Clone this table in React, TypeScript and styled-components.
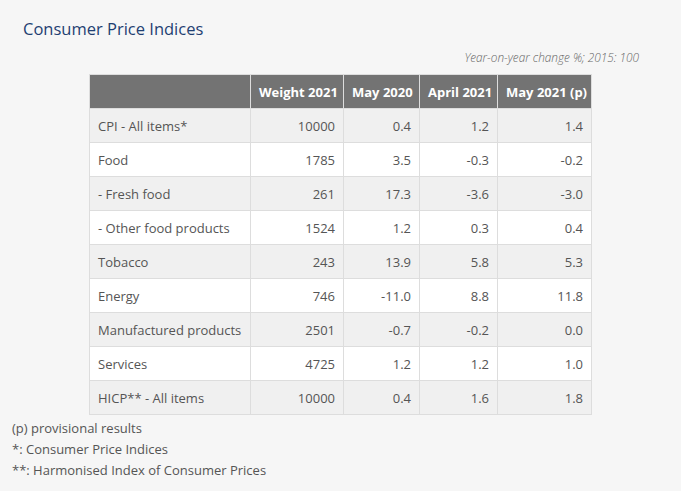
import React from "react";
import styled, { createGlobalStyle } from "styled-components";

const Global = createGlobalStyle`
  html, body { margin: 0; padding: 0; background: #f6f6f6; }
  body { font-family: "Open Sans", "Liberation Sans", Arial, sans-serif; color: #555; }
`;

const Page = styled.div`
  padding: 17px 42px 0 12px;
  width: 681px;
  box-sizing: border-box;
`;

const Title = styled.h2`
  margin: 0 0 0 11px;
  font-size: 16.5px;
  line-height: 24px;
  font-weight: 400;
  color: #1f3f72;
`;

const Note = styled.div`
  margin-top: 8px;
  text-align: right;
  font-size: 11.8px;
  line-height: 16px;
  font-style: italic;
  font-weight: 300;
  color: #666;
`;

const Table = styled.table`
  margin: 9px 0 0 77px;
  border-collapse: collapse;
  width: 502px;
  table-layout: fixed;
  font-size: 13px;
  border: 1px solid #ddd;
`;

const Th = styled.th<{ $w: number }>`
  width: ${(p) => p.$w}px;
  height: 34px;
  padding: 0 8px;
  box-sizing: border-box;
  background: #737373;
  color: #fff;
  font-weight: 700;
  text-align: right;
  border: 1px solid #ddd;
  white-space: nowrap;
`;

const Tr = styled.tr<{ $odd: boolean }>`
  background: ${(p) => (p.$odd ? "#f0f0f0" : "#ffffff")};
`;

const Td = styled.td<{ $label?: boolean }>`
  height: 34px;
  padding: 0 8px;
  box-sizing: border-box;
  text-align: ${(p) => (p.$label ? "left" : "right")};
  border: 1px solid #ddd;
  color: #555;
  white-space: nowrap;
`;

const Footnotes = styled.div`
  margin-top: 3px;
  font-size: 13px;
  line-height: 21px;
  color: #555;
`;

const cols: [string, number][] = [
  ["", 161],
  ["Weight 2021", 93],
  ["May 2020", 76],
  ["April 2021", 78],
  ["May 2021 (p)", 94],
];

const rows: string[][] = [
  ["CPI - All items*", "10000", "0.4", "1.2", "1.4"],
  ["Food", "1785", "3.5", "-0.3", "-0.2"],
  ["- Fresh food", "261", "17.3", "-3.6", "-3.0"],
  ["- Other food products", "1524", "1.2", "0.3", "0.4"],
  ["Tobacco", "243", "13.9", "5.8", "5.3"],
  ["Energy", "746", "-11.0", "8.8", "11.8"],
  ["Manufactured products", "2501", "-0.7", "-0.2", "0.0"],
  ["Services", "4725", "1.2", "1.2", "1.0"],
  ["HICP** - All items", "10000", "0.4", "1.6", "1.8"],
];

export default function App() {
  return (
    <>
      <Global />
      <Page>
        <Title>Consumer Price Indices</Title>
        <Note>Year-on-year change %; 2015: 100</Note>
        <Table>
          <thead>
            <tr>
              {cols.map(([c, w], i) => (
                <Th key={i} $w={w}>
                  {c}
                </Th>
              ))}
            </tr>
          </thead>
          <tbody>
            {rows.map((r, i) => (
              <Tr key={i} $odd={i % 2 === 0}>
                {r.map((c, j) => (
                  <Td key={j} $label={j === 0}>
                    {c}
                  </Td>
                ))}
              </Tr>
            ))}
          </tbody>
        </Table>
        <Footnotes>
          <div>(p) provisional results</div>
          <div>*: Consumer Price Indices</div>
          <div>**: Harmonised Index of Consumer Prices</div>
        </Footnotes>
      </Page>
    </>
  );
}
